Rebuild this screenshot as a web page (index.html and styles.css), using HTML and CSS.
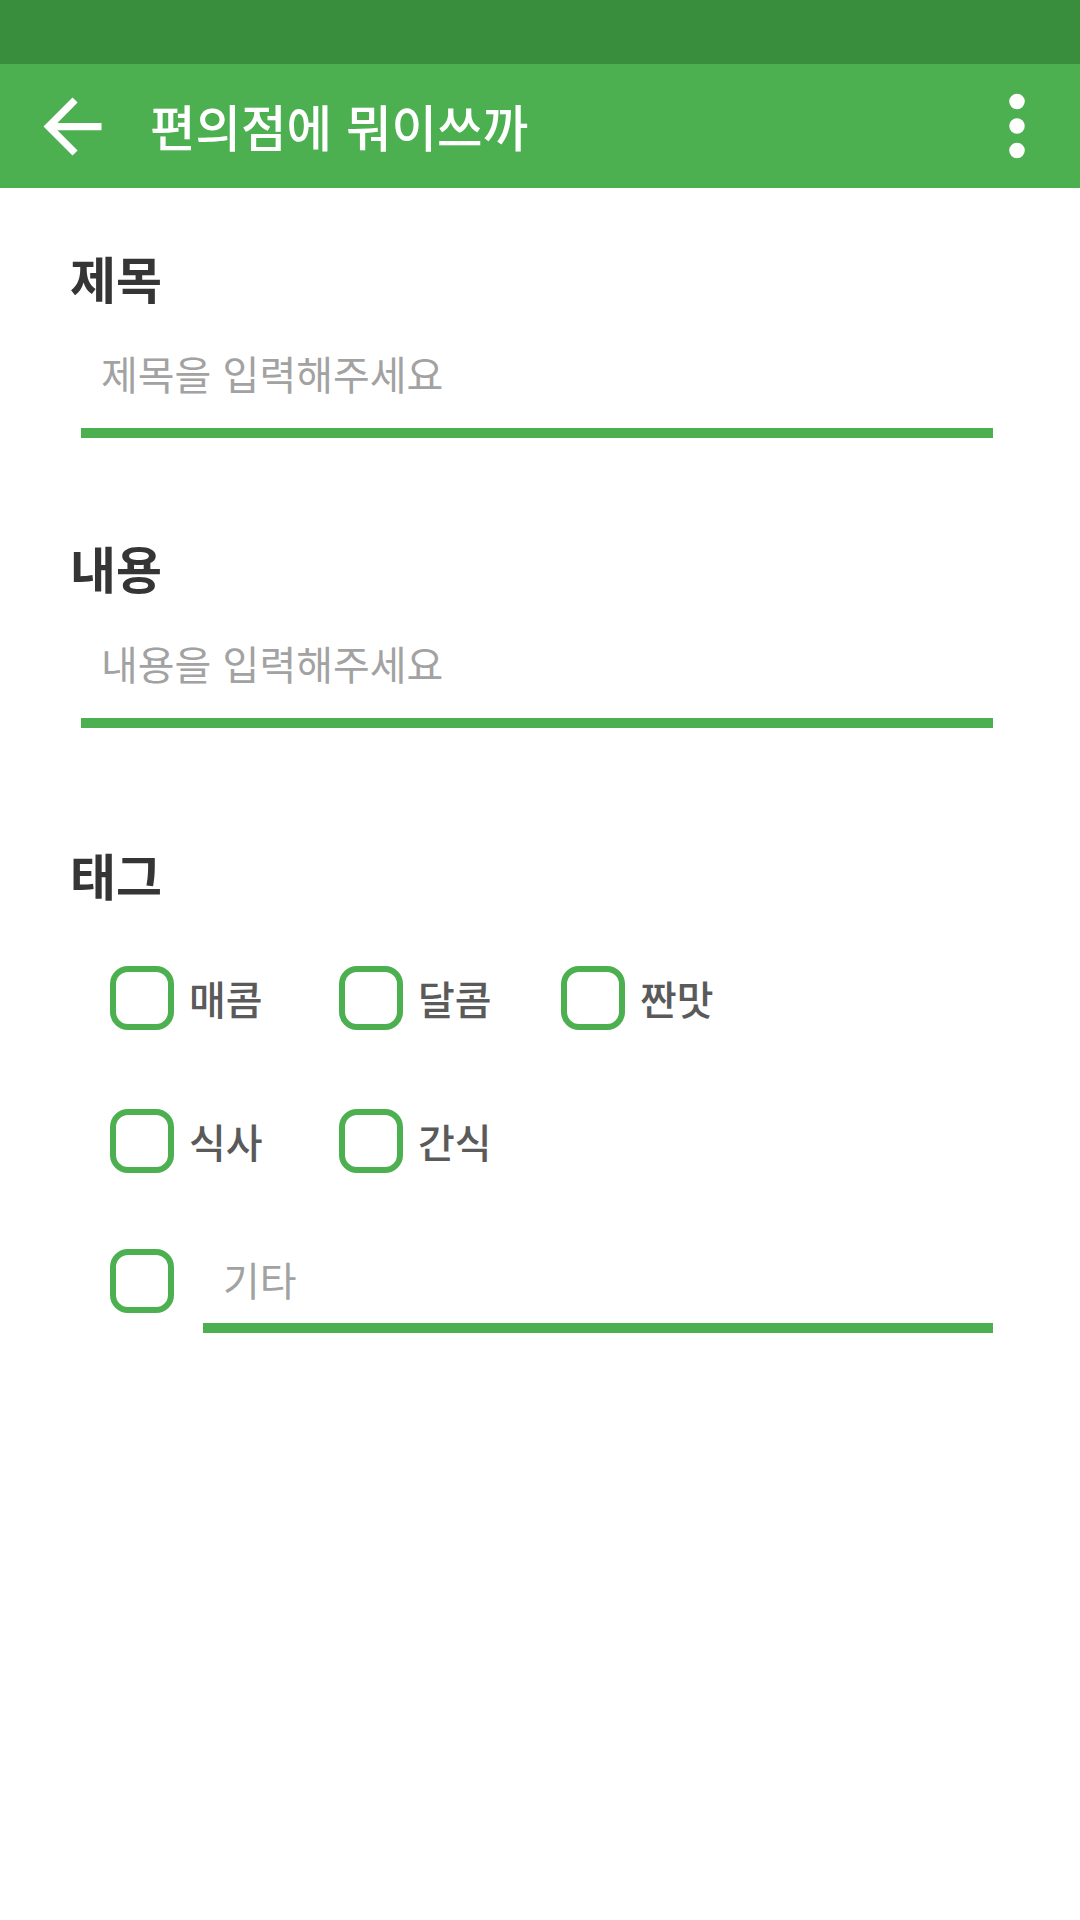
FILE: index.html
```html
<!DOCTYPE html>
<html lang="ko">
<head>
<meta charset="utf-8">
<title>편의점에 뭐이쓰까</title>
<link rel="stylesheet" href="styles.css">
</head>
<body>
<div class="status-bar"></div>
<header class="toolbar">
  <button class="icon-btn back" aria-label="뒤로">
    <svg viewBox="0 0 24 24" width="87" height="87"><path fill="#fff" d="M20 11H7.83l5.59-5.59L12 4l-8 8 8 8 1.41-1.41L7.83 13H20v-2z"/></svg>
  </button>
  <h1 class="title">편의점에 뭐이쓰까</h1>
  <button class="icon-btn menu" aria-label="메뉴">
    <svg viewBox="0 0 24 24" width="98" height="98"><circle cx="12" cy="6" r="1.9" fill="#fff"/><circle cx="12" cy="12" r="1.9" fill="#fff"/><circle cx="12" cy="18" r="1.9" fill="#fff"/></svg>
  </button>
</header>
<main class="form">
  <section class="field">
    <h2 class="label">제목</h2>
    <div class="input"><span class="placeholder">제목을 입력해주세요</span></div>
  </section>
  <section class="field">
    <h2 class="label">내용</h2>
    <div class="input"><span class="placeholder">내용을 입력해주세요</span></div>
  </section>
  <section class="tags">
    <h2 class="label">태그</h2>
    <div class="tag-grid">
      <label class="tag"><span class="box"></span><span class="tag-text">매콤</span></label>
      <label class="tag"><span class="box"></span><span class="tag-text">달콤</span></label>
      <label class="tag"><span class="box"></span><span class="tag-text">짠맛</span></label>
    </div>
    <div class="tag-grid">
      <label class="tag"><span class="box"></span><span class="tag-text">식사</span></label>
      <label class="tag"><span class="box"></span><span class="tag-text">간식</span></label>
    </div>
    <div class="tag-other">
      <span class="box"></span>
      <div class="input other-input"><span class="placeholder">기타</span></div>
    </div>
  </section>
</main>
</body>
</html>
```
FILE: styles.css
```css
html, body {
  margin: 0;
  padding: 0;
  background: #ffffff;
}
body {
  width: 1080px;
  height: 1920px;
  font-family: "Noto Sans CJK KR", "Noto Sans", sans-serif;
  overflow: hidden;
}
.status-bar {
  height: 64px;
  background: #388E3C;
}
.toolbar {
  height: 124px;
  background: #4CAF50;
  display: flex;
  align-items: center;
  padding-left: 29px;
  padding-right: 14px;
}
.icon-btn {
  background: none;
  border: 0;
  padding: 0;
  margin: 0;
  display: flex;
}
.title {
  margin: 0 0 0 34px;
  flex: 1;
  color: #ffffff;
  font-size: 49.5px;
  line-height: 50px;
  font-weight: 500;
}
.form {
  padding: 64px 87px 0 70px;
}
.field + .field {
  margin-top: 104px;
}
.label {
  margin: 0;
  font-size: 50px;
  line-height: 50px;
  font-weight: 700;
  color: #353535;
}
.input {
  margin-left: 11px;
  padding: 51px 0 35px 20px;
  border-bottom: 10px solid #4CAF50;
}
.placeholder {
  display: block;
  font-size: 40px;
  line-height: 40px;
  color: #a2a2a2;
}
.tags {
  margin-top: 121px;
}
.tags .label {
  margin-bottom: 67px;
}
.tag-grid {
  display: grid;
  grid-template-columns: 229px 222px auto;
  margin-left: 40px;
  margin-bottom: 79px;
}
.tag {
  display: flex;
  align-items: center;
  gap: 15px;
}
.box {
  box-sizing: border-box;
  width: 64px;
  height: 64px;
  border: 6px solid #4CAF50;
  border-radius: 18px;
  flex: none;
}
.tag-text {
  font-size: 40px;
  line-height: 40px;
  font-weight: 500;
  color: #5a5a5a;
}
.tag-other {
  display: flex;
  align-items: flex-start;
  margin-left: 40px;
  margin-top: -3px;
}
.other-input {
  flex: 1;
  margin: 10px 0 0 29px;
  padding: 0 0 24px 20px;
}
```
